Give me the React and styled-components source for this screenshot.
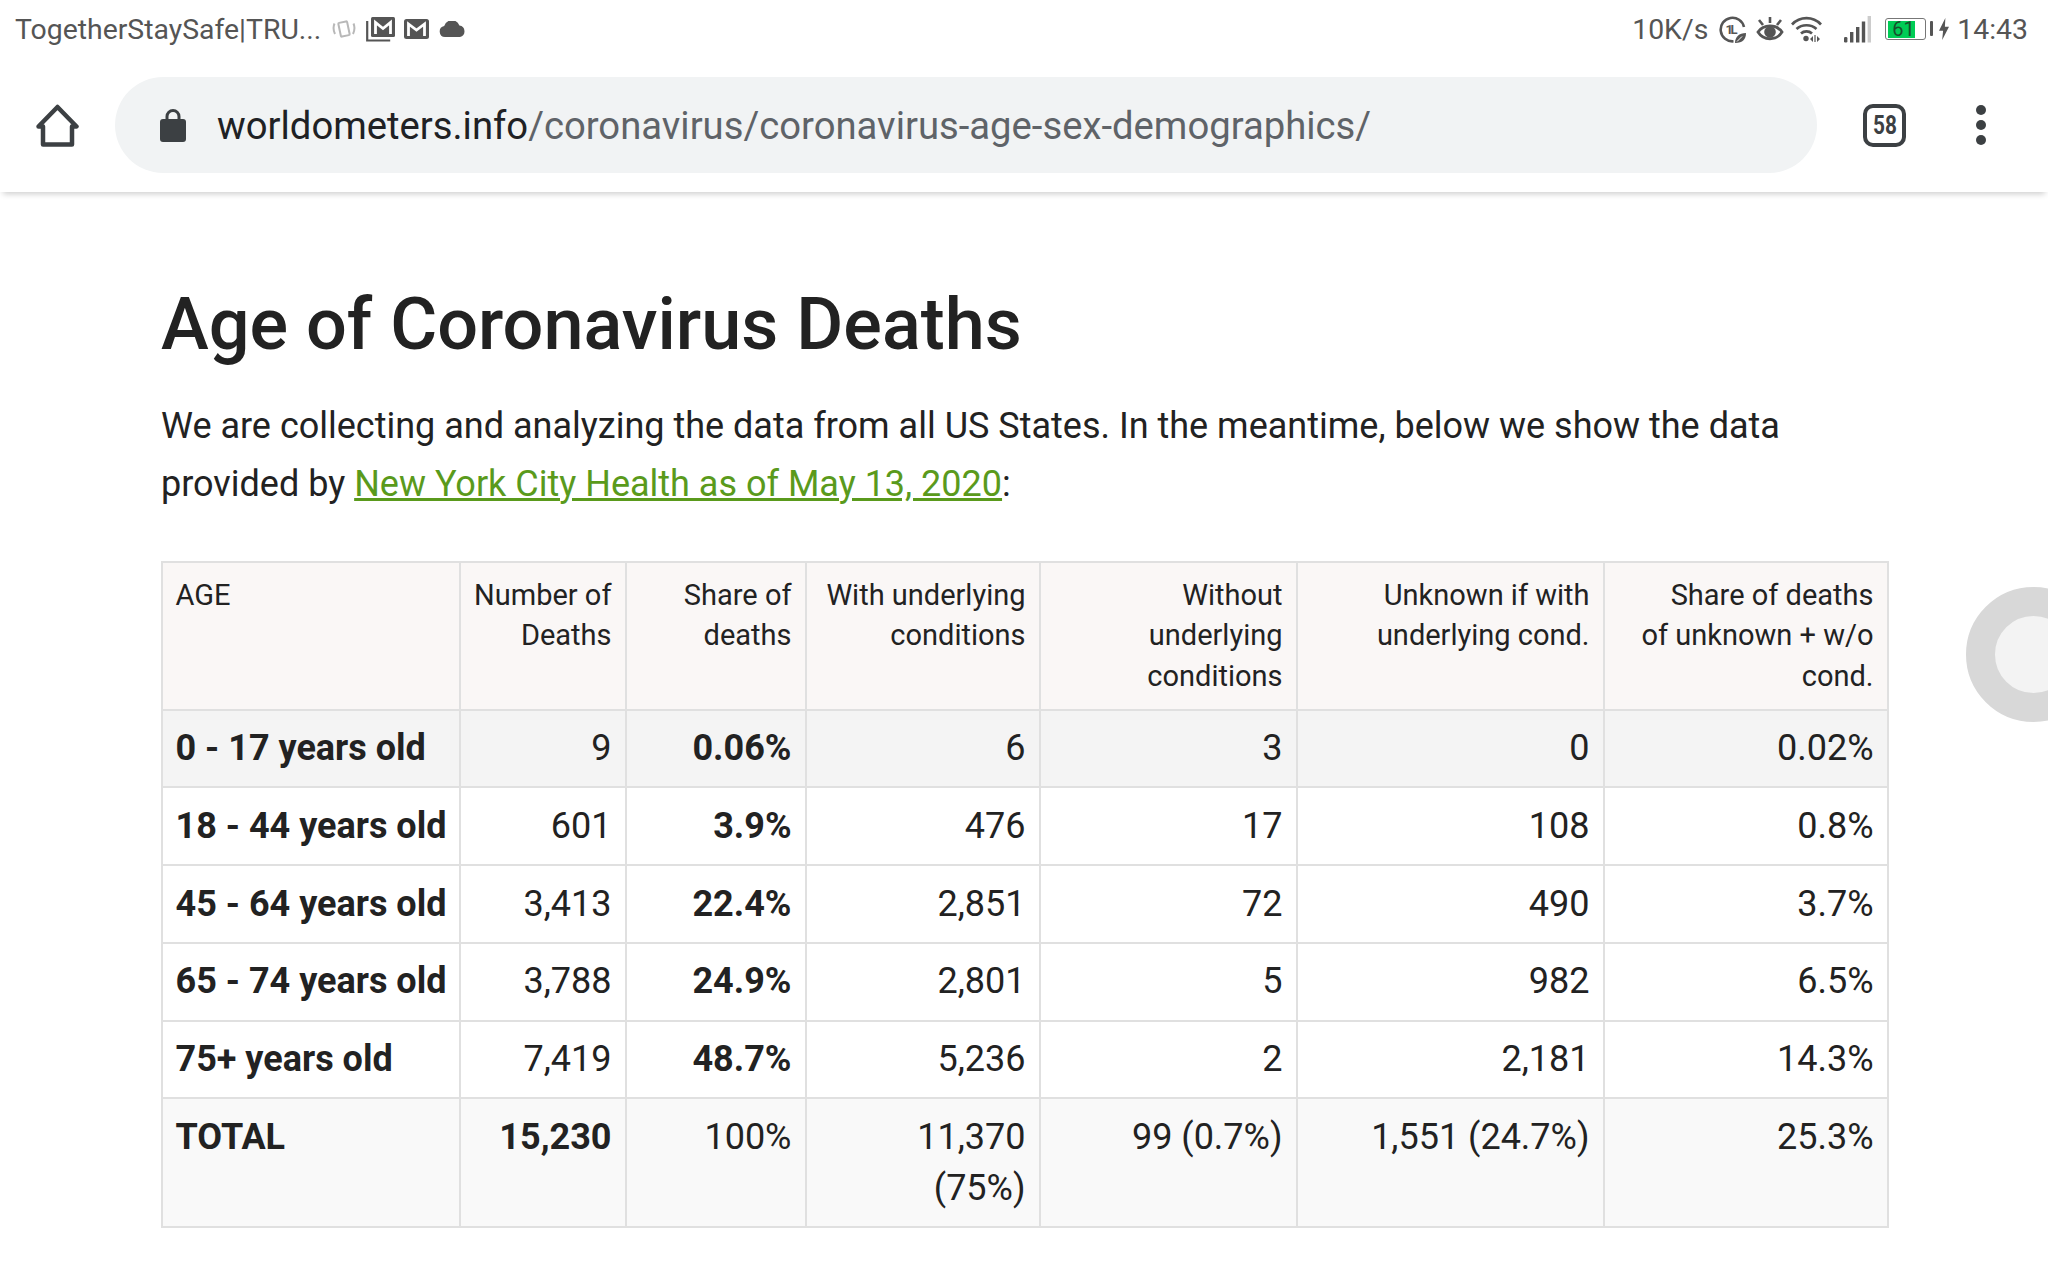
import styled, { createGlobalStyle } from "styled-components"

const GlobalStyle = createGlobalStyle`
  html, body {
    margin: 0;
    padding: 0;
    background: #fff;
    overflow: hidden;
  }
  body {
    font-family: Roboto, "Noto Sans", sans-serif;
    color: #222;
  }
`

const rows = [
  ["0 - 17 years old", "9", "0.06%", "6", "3", "0", "0.02%"],
  ["18 - 44 years old", "601", "3.9%", "476", "17", "108", "0.8%"],
  ["45 - 64 years old", "3,413", "22.4%", "2,851", "72", "490", "3.7%"],
  ["65 - 74 years old", "3,788", "24.9%", "2,801", "5", "982", "6.5%"],
  ["75+ years old", "7,419", "48.7%", "5,236", "2", "2,181", "14.3%"],
]

const widths = [298, 166, 180, 234, 257, 307, 284]

export default function App() {
  return (
    <Page>
      <GlobalStyle />
      <StatusBar>
        <StatusGroup>
          <StatusText>TogetherStaySafe|TRU...</StatusText>
          <VibrateIcon />
          <MailStackIcon />
          <MailIcon />
          <CloudIcon />
        </StatusGroup>
        <StatusGroup>
          <StatusText>10K/s</StatusText>
          <EcoIcon />
          <EyeIcon />
          <WifiIcon />
          <SignalIcon />
          <Battery>
            <BatteryFill>61</BatteryFill>
          </Battery>
          <BoltIcon />
          <StatusText>14:43</StatusText>
        </StatusGroup>
      </StatusBar>

      <Toolbar>
        <HomeIcon />
        <AddressBar>
          <LockIcon />
          <Url>
            <strong>worldometers.info</strong>/coronavirus/coronavirus-age-sex-demographics/
          </Url>
        </AddressBar>
        <TabCount>
          <TabNumber>58</TabNumber>
        </TabCount>
        <MenuDots>
          <span />
          <span />
          <span />
        </MenuDots>
      </Toolbar>

      <Content>
        <Heading>Age of Coronavirus Deaths</Heading>
        <Intro>
          We are collecting and analyzing the data from all US States. In the meantime, below we show the data
          provided by <a href="#nyc">New York City Health as of May 13, 2020</a>:
        </Intro>

        <DataTable>
          <colgroup>
            {widths.map((w, i) => (
              <col key={i} style={{ width: w }} />
            ))}
          </colgroup>
          <thead>
            <tr>
              <HeadCell $left>AGE</HeadCell>
              <HeadCell $tight>Number of<br />Deaths</HeadCell>
              <HeadCell>Share of deaths</HeadCell>
              <HeadCell>With underlying conditions</HeadCell>
              <HeadCell>Without underlying conditions</HeadCell>
              <HeadCell>Unknown if with underlying cond.</HeadCell>
              <HeadCell>Share of deaths<br />of unknown + w/o cond.</HeadCell>
            </tr>
          </thead>
          <tbody>
            {rows.map((row, i) => (
              <BodyRow key={row[0]} $shade={i === 0}>
                <Cell $left $bold>{row[0]}</Cell>
                <Cell>{row[1]}</Cell>
                <Cell $bold>{row[2]}</Cell>
                <Cell>{row[3]}</Cell>
                <Cell>{row[4]}</Cell>
                <Cell>{row[5]}</Cell>
                <Cell>{row[6]}</Cell>
              </BodyRow>
            ))}
            <TotalRow>
              <Cell $left $bold>TOTAL</Cell>
              <Cell $bold>15,230</Cell>
              <Cell>100%</Cell>
              <Cell>11,370 (75%)</Cell>
              <Cell>99 (0.7%)</Cell>
              <Cell>1,551 (24.7%)</Cell>
              <Cell>25.3%</Cell>
            </TotalRow>
          </tbody>
        </DataTable>
      </Content>

      <ScrollRing />
    </Page>
  )
}

function VibrateIcon() {
  return (
    <StatusSvg width="24" height="22" viewBox="0 0 24 22" fill="none" stroke="#b8b8b8" strokeWidth="2" $gap="0 0 0 11px">
      <rect x="7.5" y="4" width="9" height="14" rx="1" transform="rotate(-12 12 11)" />
      <path d="M2.5 5.5c-1.500 3.500-1.200 7 .5 10.500M21.500 5.500c1.500 3.500 1.200 7-.5 10.500" />
    </StatusSvg>
  )
}

function MailStackIcon() {
  return (
    <StatusSvg width="29" height="25" viewBox="0 0 29 25" fill="none" $gap="0 0 0 10px">
      <path d="M1.2 4v19.500h23" stroke="#555" strokeWidth="2.2" />
      <rect x="5" y="0" width="24" height="20" rx="1.5" fill="#555" />
      <path d="M9.5 17V5.500l7.500 6 7.500-6V17" stroke="#fff" strokeWidth="2.8" />
    </StatusSvg>
  )
}

function MailIcon() {
  return (
    <StatusSvg width="25" height="20" viewBox="0 0 25 20" fill="none" $gap="0 0 0 9px">
      <rect x="0" y="0" width="25" height="20" rx="2.5" fill="#555" />
      <path d="M4.5 17V5l8 6 8-6v12" stroke="#fff" strokeWidth="2.8" />
    </StatusSvg>
  )
}

function CloudIcon() {
  return (
    <StatusSvg width="27" height="16" viewBox="0 0 27 16" $gap="0 0 0 10px">
      <path d="M6 16a5.500 5.500 0 0 1-.8-10.900A8 8 0 0 1 20.400 4.600 5.800 5.800 0 0 1 21 16z" fill="#555" />
    </StatusSvg>
  )
}

function EcoIcon() {
  return (
    <StatusSvg width="27" height="27" viewBox="0 0 27 27" fill="none" $gap="0 0 0 11px">
      <path d="M14.5 25.300A11.800 11.800 0 1 1 25 11" stroke="#555" strokeWidth="2.6" />
      <text x="6.500" y="18" fontSize="13" fontWeight="700" fill="#555" fontFamily="Roboto, sans-serif" textLength="12">1L</text>
      <path d="M16 27c0-6 4-10 11-10 0 6-3 10-11 10z" fill="#555" />
      <path d="M18 25.500l5-5" stroke="#fff" strokeWidth="1" />
    </StatusSvg>
  )
}

function EyeIcon() {
  return (
    <StatusSvg width="28" height="26" viewBox="0 0 28 26" fill="none" $gap="0 0 0 10px">
      <path d="M2 16c5.500-8 18.500-8 24 0-5.500 9-18.500 9-24 0z" stroke="#555" strokeWidth="2.8" />
      <circle cx="14" cy="16" r="5.8" fill="#555" />
      <path d="M14 1v6M3 4l4 5M25 4l-4 5" stroke="#555" strokeWidth="2.6" />
    </StatusSvg>
  )
}

function WifiIcon() {
  return (
    <StatusSvg width="32" height="26" viewBox="0 0 32 26" fill="none" stroke="#555" strokeWidth="2.7" $gap="0 0 0 7px">
      <path d="M1 8.500c8-8.500 21-8.500 29 0M5.500 13c5.500-5 14.500-5 20 0M10 17.500c3-2.800 8-2.800 11 0" />
      <circle cx="15" cy="22.500" r="2.7" fill="#555" stroke="none" />
      <path d="M22 20v6l-3-3zM26 20v6l3-3z" fill="#555" stroke="none" />
      <path d="M24 19v7" strokeWidth="1.2" />
    </StatusSvg>
  )
}

function SignalIcon() {
  return (
    <StatusSvg width="27" height="27" viewBox="0 0 27 27" $gap="0 0 0 21px">
      <rect x="0" y="21" width="3.4" height="5.5" rx="1.2" fill="#555" />
      <rect x="6" y="16" width="3.4" height="10.5" fill="#555" />
      <rect x="12" y="11" width="3.4" height="15.5" fill="#555" />
      <rect x="17.8" y="5.500" width="3.4" height="21" fill="#555" />
      <rect x="23.6" y="0" width="3.4" height="26.5" fill="#ccc" />
    </StatusSvg>
  )
}

function BoltIcon() {
  return (
    <StatusSvg width="10" height="24" viewBox="0 0 11 24" $gap="0 8px 0 13px">
      <path d="M7 0L0 14h4.500L3.500 24 11 9.500H6.500z" fill="#555" />
    </StatusSvg>
  )
}

function HomeIcon() {
  return (
    <HomeSvg width="43" height="43" viewBox="0 0 43 43" fill="none" stroke="#3c4043" strokeWidth="4.5" strokeLinejoin="round" strokeLinecap="round">
      <path d="M2.500 22.500L21.500 3l19 19.500h-4.500V40.500H7V22.500z" />
    </HomeSvg>
  )
}

function LockIcon() {
  return (
    <LockSvg width="26" height="34" viewBox="0 0 26 34">
      <path d="M7 13V8.500a6 6 0 0 1 12 0V13" fill="none" stroke="#3c4043" strokeWidth="3" />
      <rect x="0" y="11" width="26" height="23" rx="3" fill="#3c4043" />
    </LockSvg>
  )
}

const Page = styled.div`
  position: relative;
  width: 2048px;
  height: 1280px;
  overflow: hidden;
  background: #fff;
`

const StatusBar = styled.div`
  display: flex;
  justify-content: space-between;
  align-items: center;
  height: 58px;
  padding: 0 20px 0 15px;
`

const StatusGroup = styled.div`
  display: flex;
  align-items: center;
`

const StatusText = styled.span`
  font-size: 28.4px;
  color: #555;
  white-space: nowrap;
`

const StatusSvg = styled.svg`
  flex: none;
  margin: ${(p) => p.$gap};
`

const Battery = styled.div`
  position: relative;
  flex: none;
  width: 41px;
  height: 22px;
  margin-left: 14px;
  padding: 1.5px;
  box-sizing: border-box;
  border: 1.5px solid #777;
  border-radius: 3px;

  &::after {
    content: "";
    position: absolute;
    right: -8px;
    top: 2px;
    width: 3px;
    height: 15px;
    border-radius: 1px;
    background: #555;
  }
`

const BatteryFill = styled.div`
  width: 27px;
  height: 100%;
  background: #00cc55;
  color: #17502c;
  font-size: 20px;
  line-height: 16px;
  text-align: right;
`

const Toolbar = styled.div`
  position: relative;
  display: flex;
  align-items: center;
  height: 134px;
  box-sizing: border-box;
  background: #fff;
  box-shadow: 0 5px 6px -3px rgba(0, 0, 0, 0.2);
`

const HomeSvg = styled.svg`
  flex: none;
  margin: 0 36px 0 36px;
`

const AddressBar = styled.div`
  display: flex;
  align-items: center;
  flex: none;
  width: 1702px;
  height: 96px;
  border-radius: 48px;
  background: #f1f3f4;
`

const LockSvg = styled.svg`
  flex: none;
  margin: 0 31px 0 45px;
`

const Url = styled.div`
  padding-top: 2px;
  font-size: 38.25px;
  color: #5f6368;
  white-space: nowrap;

  strong {
    font-weight: 400;
    color: #202124;
  }
`

const TabCount = styled.div`
  display: flex;
  align-items: center;
  justify-content: center;
  flex: none;
  width: 43px;
  height: 43px;
  margin-left: 46px;
  box-sizing: border-box;
  border: 4.5px solid #3c4043;
  border-radius: 10px;
  color: #3c4043;
`

const TabNumber = styled.span`
  display: inline-block;
  font-size: 26px;
  font-weight: 700;
  line-height: 1;
  transform: scaleX(0.8);
`

const MenuDots = styled.div`
  display: flex;
  flex-direction: column;
  gap: 5px;
  margin-left: 70px;

  span {
    width: 10px;
    height: 10px;
    border-radius: 50%;
    background: #3c4043;
  }
`

const Content = styled.main`
  padding: 93px 0 0 161px;
`

const Heading = styled.h1`
  margin: 0;
  font-size: 72px;
  font-weight: 500;
  line-height: 80px;
  color: #222;
`

const Intro = styled.p`
  width: 1700px;
  margin: 33px 0 0;
  font-size: 36px;
  line-height: 57.5px;
  color: #222;

  a {
    color: #5a9a1c;
    text-decoration: underline;
  }
`

const DataTable = styled.table`
  width: 1727px;
  margin-top: 48px;
  table-layout: fixed;
  border-collapse: collapse;
`

const HeadCell = styled.th`
  padding: 11.5px 13.5px 12.5px ${(p) => (p.$left ? "12.5px" : p.$tight ? "4px" : "13.5px")};
  border: 2px solid #e0e0e0;
  background: #faf7f6;
  font-size: 29px;
  font-weight: 400;
  line-height: 40.5px;
  color: #222;
  text-align: ${(p) => (p.$left ? "left" : "right")};
  vertical-align: top;
`

const Cell = styled.td`
  padding: 12.5px ${(p) => (p.$left ? "2px" : "13.5px")} 12.5px ${(p) => (p.$left ? "12.5px" : "13.5px")};
  border: 2px solid #e0e0e0;
  font-size: 36px;
  font-weight: ${(p) => (p.$bold ? 700 : 400)};
  line-height: 50.8px;
  color: #222;
  text-align: ${(p) => (p.$left ? "left" : "right")};
  vertical-align: top;
`

const BodyRow = styled.tr`
  background: ${(p) => (p.$shade ? "#f4f4f4" : "#fff")};
`

const TotalRow = styled.tr`
  background: #f9f9f9;
`

const ScrollRing = styled.div`
  position: absolute;
  left: 1966px;
  top: 587px;
  width: 135px;
  height: 135px;
  box-sizing: border-box;
  border: 29px solid #d8d8d8;
  border-radius: 50%;
  background: #f3f3f3;
`
